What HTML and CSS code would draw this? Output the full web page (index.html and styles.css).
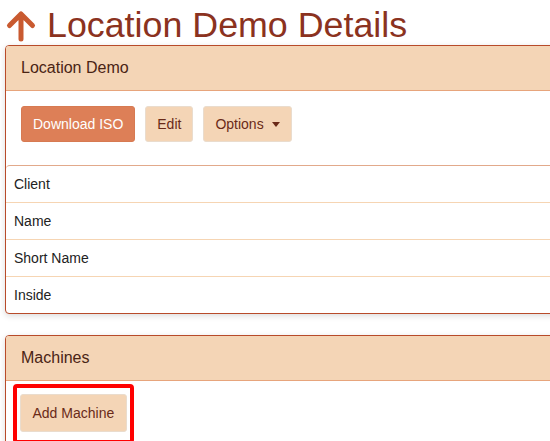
FILE: index.html
```html
<!DOCTYPE html>
<html>
<head>
<meta charset="utf-8">
<link rel="stylesheet" href="styles.css">
</head>
<body>
<div class="page">
  <h1 class="title">
    <svg class="title-icon" viewBox="0 0 32 32" width="32" height="32" aria-hidden="true">
      <path d="M16 4 L16 29 M4.5 15.5 L16 4 L27.5 15.5" fill="none" stroke="#c95a30" stroke-width="5" stroke-linecap="round" stroke-linejoin="round"/>
    </svg>
    <span>Location Demo Details</span>
  </h1>

  <section class="panel">
    <div class="panel-heading">Location Demo</div>
    <div class="panel-body">
      <div class="btn-row">
        <button class="btn btn-primary">Download ISO</button>
        <button class="btn">Edit</button>
        <button class="btn">Options <span class="caret"></span></button>
      </div>
    </div>
    <ul class="list-group">
      <li class="list-item">Client</li>
      <li class="list-item">Name</li>
      <li class="list-item">Short Name</li>
      <li class="list-item">Inside</li>
    </ul>
  </section>

  <section class="panel">
    <div class="panel-heading">Machines</div>
    <div class="panel-body tight">
      <div class="highlight">
        <button class="btn btn-wide">Add Machine</button>
      </div>
    </div>
  </section>
</div>
</body>
</html>
```

FILE: styles.css
```css
html, body {
  margin: 0;
  padding: 0;
  background: #ffffff;
  overflow: hidden;
}

body {
  font-family: "Liberation Sans", Arial, sans-serif;
  font-size: 14px;
  line-height: 20px;
  color: #222;
}

.page {
  width: 600px;
  padding-left: 5px;
}

.title {
  margin: 0;
  padding-top: 5px;
  height: 40px;
  display: flex;
  align-items: center;
  gap: 10px;
  font-size: 35.8px;
  font-weight: normal;
  line-height: 40px;
  color: #8b3220;
}

.title-icon {
  flex: none;
  margin-top: 2px;
}

.panel {
  border: 1px solid #b84b2a;
  border-radius: 4px;
  box-shadow: 0 2px 6px rgba(0, 0, 0, 0.14);
  margin-bottom: 21px;
  background: #fff;
}

.panel-heading {
  background: #f4d5b6;
  border-bottom: 1px solid #e7a57c;
  border-radius: 3px 3px 0 0;
  padding: 10px 15px;
  font-size: 16px;
  line-height: 24px;
  color: #4a2414;
}

.panel-body {
  padding: 15px 15px 23px;
}

.panel-body.tight {
  padding: 3px 7px 0;
}

.btn-row {
  display: flex;
  gap: 10px;
}

.btn {
  font-family: inherit;
  font-size: 14px;
  line-height: 20px;
  padding: 7px 11px;
  border: 1px solid #eadccd;
  border-radius: 3px;
  background: #f4d5b6;
  color: #6a2a18;
  display: inline-flex;
  align-items: center;
  gap: 8px;
}

.btn-wide {
  padding: 8px 11.5px;
}

.btn-primary {
  background: #dd7f57;
  border-color: #d77a52;
  color: #fff;
}

.caret {
  width: 0;
  height: 0;
  border-left: 4px solid transparent;
  border-right: 4px solid transparent;
  border-top: 5px solid #6a2a18;
  margin-top: 1px;
}

.list-group {
  list-style: none;
  margin: 0;
  padding: 0;
  border-top: 1px solid #e2a98b;
  border-radius: 4px 0 0 0;
}

.list-item {
  padding: 8px 8px;
  border-bottom: 1px solid #f6d5b3;
  color: #222;
}

.list-item:last-child {
  border-bottom: none;
}

.highlight {
  display: inline-block;
  border: 4px solid #ff0000;
  border-radius: 4px;
  padding: 6px 3px 8px;
}
```
